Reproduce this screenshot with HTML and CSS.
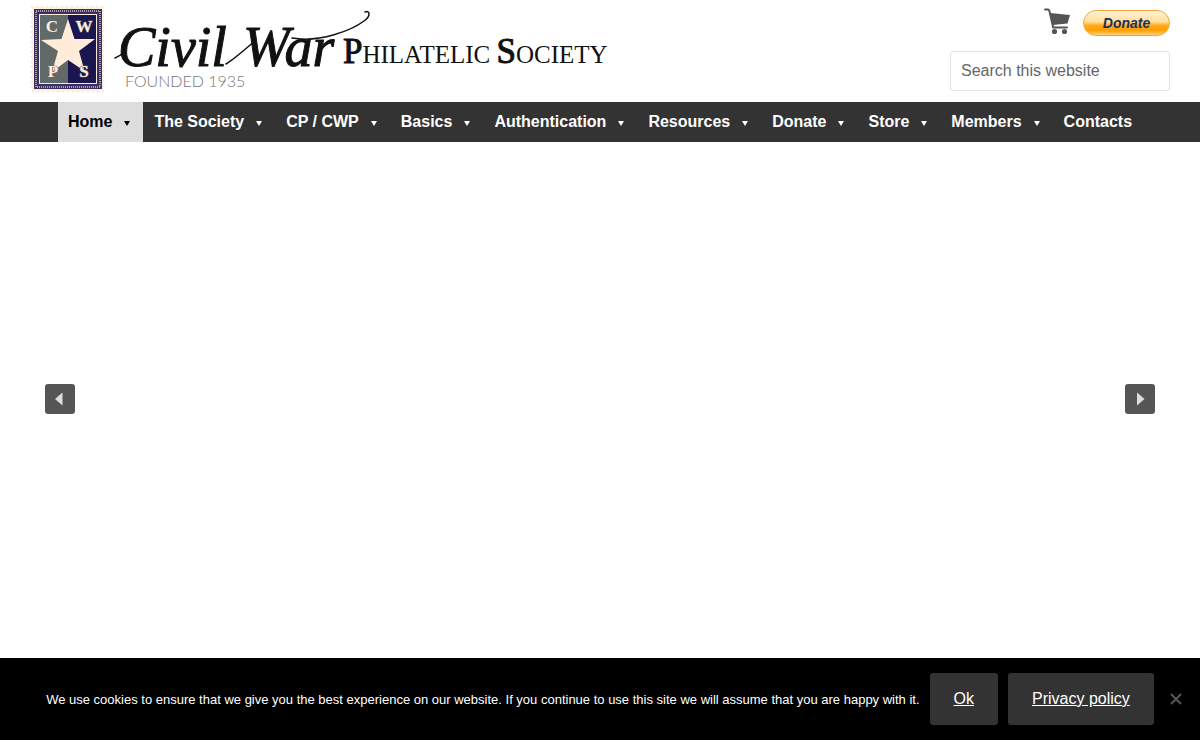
FILE: index.html
```html
<!DOCTYPE html>
<html lang="en">
<head>
  <meta charset="UTF-8">
  <meta name="viewport" content="width=device-width, initial-scale=1.0">
  <title>Civil War Philatelic Society</title>
  <link rel="stylesheet" href="styles.css">
</head>
<body>
  <header class="site-header">
    <a class="logo" href="#" aria-label="Civil War Philatelic Society">
      <svg width="580" height="94" viewBox="0 0 580 94">
        <!-- stamp -->
        <rect x="2" y="7" width="71" height="84" fill="#fff1e6" stroke="#fdeadb" stroke-width="3" stroke-linecap="round" stroke-dasharray="0 5"/>
        <rect x="4" y="9" width="68" height="80" fill="#38305f"/>
        <rect x="6" y="11" width="64" height="76" fill="none" stroke="#a99fb5" stroke-width="2" stroke-dasharray="1 1"/>
        <rect x="9" y="14" width="58" height="70" fill="#fdeadb"/>
        <rect x="10" y="15" width="28" height="68" fill="#626969"/>
        <rect x="38" y="15" width="28" height="68" fill="#1b164f"/>
        <path d="M38 19 L44.500 39 H65 L49 51 L54.500 71 L38 60 L22 72 L28 51 L11 40 L31.500 39 Z" fill="#ffecd9"/>
        <g class="stamp-letters">
          <text x="22" y="32">C</text>
          <text x="54" y="32">W</text>
          <text x="23" y="77">P</text>
          <text x="54" y="77">S</text>
        </g>
        <!-- wordmark -->
        <text class="logo-script" x="88" y="66">Civil</text>
        <text class="logo-script" x="213" y="66">War</text>
        <path d="M85 58 C88 57 91 55 94 52" fill="none" stroke="#111" stroke-width="1.500" stroke-linecap="round"/>
        <path d="M196 64 C203 60 212 52 226 40" fill="none" stroke="#111" stroke-width="1.500" stroke-linecap="round"/>
        <path d="M262 38 C290 43 322 30 334 21 C341 16 340 10 335 12" fill="none" stroke="#111" stroke-width="1.500" stroke-linecap="round"/>
        <text class="logo-caps" x="313" y="63"><tspan class="logo-initial">P</tspan>HILATELIC <tspan class="logo-initial">S</tspan>OCIETY</text>
        <text class="logo-founded" x="95" y="87">FOUNDED 1935</text>
      </svg>
    </a>
    <div class="header-tools">
      <div class="header-actions">
        <a class="cart" href="#" aria-label="Cart">
          <svg width="27" height="28" viewBox="0 0 27 28">
            <path d="M1 1.500 H4 Q5 1.500 5.400 3 L9.200 19.500 H23" fill="none" stroke="#555" stroke-width="2" stroke-linecap="round"/>
            <path d="M6 5 L26 7 L23.500 15.500 L8.500 17 Z" fill="#555"/>
            <circle cx="10.500" cy="23.500" r="2.600" fill="#555"/>
            <circle cx="20.500" cy="23.500" r="2.600" fill="#555"/>
          </svg>
        </a>
        <button class="donate" type="button">Donate</button>
      </div>
      <form class="search" role="search">
        <input class="search-input" type="search" placeholder="Search this website" aria-label="Search this website">
      </form>
    </div>
  </header>

  <nav class="main-nav">
    <ul class="menu">
      <li><a class="menu-link has-sub current" href="#">Home</a></li>
      <li><a class="menu-link has-sub" href="#">The Society</a></li>
      <li><a class="menu-link has-sub" href="#">CP / CWP</a></li>
      <li><a class="menu-link has-sub" href="#">Basics</a></li>
      <li><a class="menu-link has-sub" href="#">Authentication</a></li>
      <li><a class="menu-link has-sub" href="#">Resources</a></li>
      <li><a class="menu-link has-sub" href="#">Donate</a></li>
      <li><a class="menu-link has-sub" href="#">Store</a></li>
      <li><a class="menu-link has-sub" href="#">Members</a></li>
      <li><a class="menu-link" href="#">Contacts</a></li>
    </ul>
  </nav>

  <main class="slider">
    <button class="slider-arrow" type="button" aria-label="Previous slide">
      <svg width="30" height="30" viewBox="0 0 30 30"><path d="M17.500 8.500 V21.500 L10 15 Z" fill="#ddd"/></svg>
    </button>
    <button class="slider-arrow" type="button" aria-label="Next slide">
      <svg width="30" height="30" viewBox="0 0 30 30"><path d="M12 8.500 V21.500 L19.500 15 Z" fill="#ddd"/></svg>
    </button>
  </main>

  <div class="cookie-notice" role="dialog" aria-label="Cookie Notice">
    <span class="cookie-text">We use cookies to ensure that we give you the best experience on our website. If you continue to use this site we will assume that you are happy with it.</span>
    <a class="cookie-button" href="#">Ok</a>
    <a class="cookie-button" href="#">Privacy policy</a>
    <button class="cookie-close" type="button" aria-label="Close">
      <svg width="12" height="12" viewBox="0 0 12 12"><path d="M1 1 L11 11 M11 1 L1 11" stroke="#555" stroke-width="2"/></svg>
    </button>
  </div>
</body>
</html>
```

FILE: styles.css
```css
* {
  box-sizing: border-box;
}

body {
  margin: 0;
  min-height: 100vh;
  display: flex;
  flex-direction: column;
  background: #fff;
  font-family: "Liberation Sans", Arial, sans-serif;
  font-size: 16px;
}

/* Header */
.site-header {
  display: flex;
  justify-content: space-between;
  min-height: 102px;
  padding: 0 30px;
}

.logo {
  display: block;
}

.logo svg {
  display: block;
}

.stamp-letters {
  font-family: "Liberation Serif", serif;
  font-size: 17px;
  font-weight: bold;
  text-anchor: middle;
  fill: #ffecd9;
  stroke: #626969;
  stroke-width: 1px;
  paint-order: stroke;
}

.logo-script {
  font-family: "Liberation Serif", serif;
  font-size: 56px;
  font-style: italic;
  fill: #111;
  stroke: #111;
  stroke-width: 1px;
}

.logo-caps {
  font-family: "Liberation Serif", serif;
  font-size: 25px;
  fill: #111;
}

.logo-initial {
  font-size: 35px;
  stroke: #111;
  stroke-width: 1px;
}

.logo-founded {
  font-family: Lato, sans-serif;
  font-size: 16px;
  font-weight: 300;
  fill: #777;
}

.header-tools {
  display: flex;
  flex-direction: column;
  align-items: flex-end;
  gap: 15px;
  width: 220px;
  padding-top: 8px;
}

.header-actions {
  display: flex;
  align-items: flex-end;
  gap: 12px;
  height: 28px;
}

.cart svg {
  display: block;
}

.donate {
  width: 87px;
  height: 26px;
  padding: 0;
  border: 1px solid #f5a33a;
  border-radius: 13px;
  background: linear-gradient(#fff3d6 0%, #ffdf9b 45%, #ffac1c 60%, #ff9f00 80%, #ffd27a 100%);
  color: #1c2e5c;
  font-family: inherit;
  font-size: 14px;
  font-weight: bold;
  font-style: italic;
  cursor: pointer;
}

.search {
  width: 100%;
}

.search-input {
  display: block;
  width: 100%;
  height: 40px;
  padding: 0 10px;
  border: 1px solid #e4e4e4;
  border-radius: 3px;
  background: #fff;
  font-family: inherit;
  font-size: 16px;
  appearance: none;
}

.search-input::placeholder {
  color: #666;
}

/* Navigation */
.main-nav {
  background: #333;
}

.menu {
  display: flex;
  flex-wrap: wrap;
  justify-content: center;
  gap: 0 1px;
  margin: 0;
  padding: 0;
  list-style: none;
}

.menu-link {
  display: flex;
  align-items: center;
  height: 40px;
  padding: 0 10px;
  color: #fff;
  font-weight: bold;
  text-decoration: none;
}

.menu-link.has-sub {
  padding-right: 13px;
}

.menu-link.has-sub::after {
  content: "";
  margin: 2px 0 0 12px;
  border: 3px solid transparent;
  border-top: 5px solid currentColor;
  border-bottom: 0;
}

.menu-link:hover,
.menu-link.current {
  background: #ddd;
  color: #000;
}

/* Slider */
.slider {
  display: flex;
  align-items: center;
  justify-content: space-between;
  flex: 1;
  padding: 0 45px 2px;
}

.slider-arrow {
  width: 30px;
  height: 30px;
  padding: 0;
  border: 0;
  border-radius: 3px;
  background: #555;
  cursor: pointer;
}

.slider-arrow svg {
  display: block;
}

/* Cookie notice */
.cookie-notice {
  position: relative;
  display: flex;
  align-items: center;
  justify-content: center;
  gap: 10px;
  padding: 15px 46px;
  background: #000;
  color: #fff;
}

.cookie-text {
  font-size: 13px;
}

.cookie-button {
  flex-shrink: 0;
  padding: 0 24px;
  border-radius: 3px;
  background: #333;
  color: #fff;
  line-height: 52px;
}

.cookie-close {
  position: absolute;
  top: 50%;
  right: 18px;
  padding: 0;
  border: 0;
  background: none;
  transform: translateY(-50%);
  cursor: pointer;
}

.cookie-close svg {
  display: block;
}
```
